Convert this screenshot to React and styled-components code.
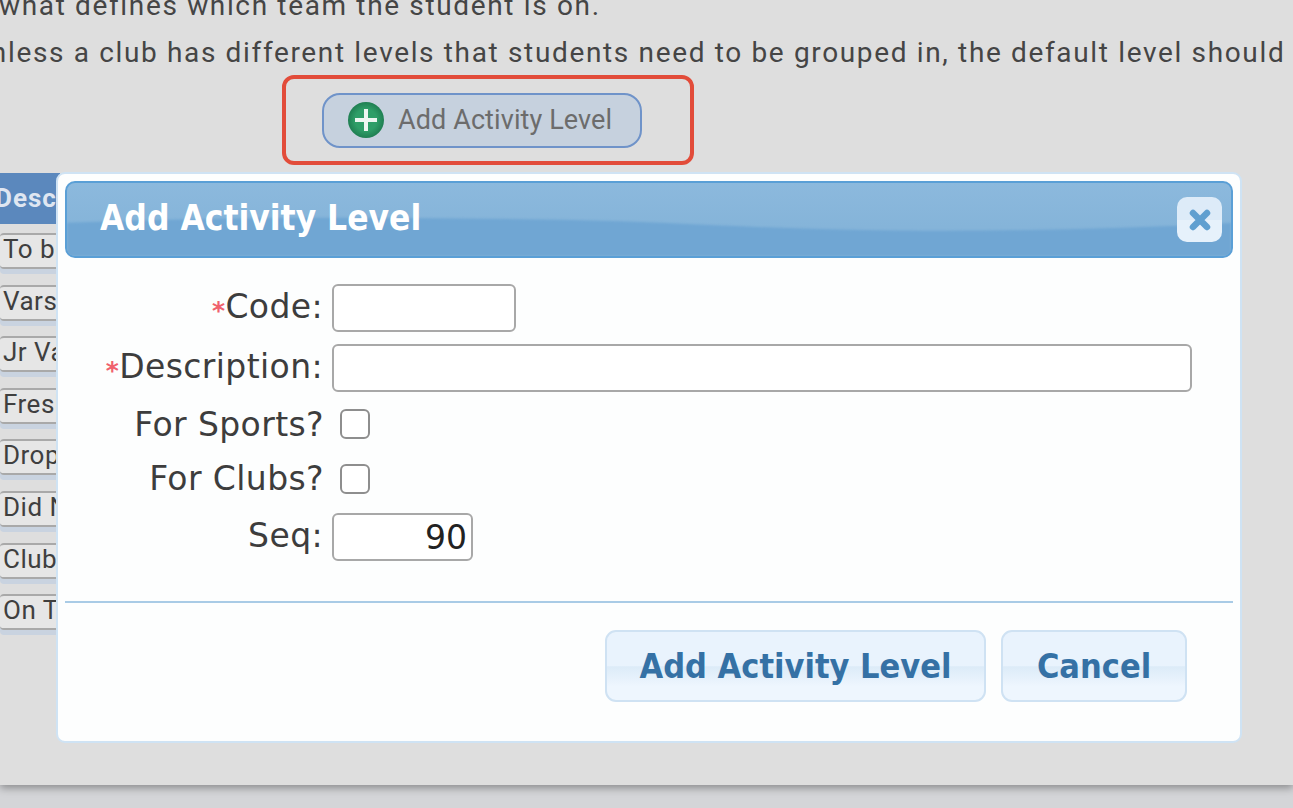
import React from "react";
import styled, { createGlobalStyle } from "styled-components";

const Global = createGlobalStyle`
  html, body { margin: 0; padding: 0; background: #d4d5d8; overflow: hidden; }
`;

const Page = styled.div`
  width: 1293px;
  height: 808px;
  position: relative;
  overflow: hidden;
  font-family: Roboto, sans-serif;
`;

const Sheet = styled.div`
  height: 785px;
  background: #dedede;
  box-shadow: 0 3px 8px rgba(0, 0, 0, 0.35);
  overflow: hidden;
`;

const Copy = styled.p`
  margin: ${(p) => p.$margin};
  font-size: 28px;
  line-height: 32px;
  letter-spacing: 1.65px;
  color: #454545;
  white-space: nowrap;
`;

const ActionRow = styled.div`
  margin: 6px 0 0 282px;
  width: 412px;
  height: 90px;
  box-sizing: border-box;
  border: 4px solid #e24c3a;
  border-radius: 12px;
  display: flex;
  align-items: center;
  justify-content: center;
  padding-right: 12px;
`;

const PillButton = styled.div`
  width: 320px;
  height: 55px;
  box-sizing: border-box;
  border: 2px solid #6f93c9;
  border-radius: 18px;
  background: #c6d1de;
  display: flex;
  align-items: center;
  gap: 14px;
  padding-left: 24px;
  font-size: 27px;
  letter-spacing: 0.1px;
  color: #6c6c6c;
  white-space: nowrap;
`;

const Table = styled.div`
  margin-top: 8px;
  width: 60px;
  overflow: hidden;
`;

const HeadCell = styled.div`
  height: 51px;
  background: #5b88bd;
  color: #dfe6f1;
  font-weight: 700;
  font-size: 26px;
  letter-spacing: 1px;
  line-height: 51px;
  white-space: nowrap;
  margin-bottom: 9px;
  text-indent: -5px;
`;

const RowCell = styled.div`
  height: 36px;
  box-sizing: border-box;
  margin-bottom: 15.6px;
  background: #e6e6e6;
  border-radius: 4px 0 0 4px;
  border-top: 2px solid #a9a9a9;
  border-bottom: 2px solid #a9a9a9;
  box-shadow: 0 5px 0 #c9d3e0;
  padding-left: 3px;
  font-size: 26px;
  letter-spacing: 0.5px;
  line-height: 28px;
  color: #3f3f3f;
  white-space: nowrap;
`;

const Modal = styled.div`
  position: absolute;
  left: 56px;
  top: 172px;
  width: 1186px;
  height: 571px;
  box-sizing: border-box;
  padding: 7px 7px 0;
  background: #fdfefe;
  border: 2px solid #cfe3f4;
  border-radius: 9px;
`;

const TitleBar = styled.div`
  position: relative;
  overflow: hidden;
  height: 77px;
  box-sizing: border-box;
  border: 2px solid #5a9fd6;
  border-radius: 10px;
  background: linear-gradient(#8cb9dd, #85b4d9 60%);
  display: flex;
  align-items: center;
  justify-content: space-between;
  padding: 0 9px 0 33px;
`;

const Gloss = styled.svg`
  position: absolute;
  left: 0;
  top: 0;
  width: 100%;
  height: 100%;
  filter: blur(1px);
`;

const TitleText = styled.div`
  position: relative;
  margin-top: -3px;
  font-family: "DejaVu Sans Condensed", "DejaVu Sans", sans-serif;
  font-weight: 700;
  font-size: 35px;
  color: #fff;
`;

const CloseButton = styled.div`
  position: relative;
  width: 45px;
  height: 45px;
  border-radius: 10px;
  background: linear-gradient(#ddebf8 0 50%, #e6f1fb 50% 100%);
  display: flex;
  align-items: center;
  justify-content: center;
`;

const Form = styled.div`
  margin-top: 26px;
  display: grid;
  grid-template-columns: 257px 1fr;
  grid-template-rows: 48px 48px 40px 45px 48px;
  row-gap: 12px;
  align-content: start;
  height: 317px;
  font-family: "DejaVu Sans", sans-serif;
  font-size: 33px;
  color: #3d3d3d;
`;

const Label = styled.div`
  justify-self: end;
  align-self: center;
  white-space: nowrap;
  letter-spacing: 0.4px;
  margin-right: ${(p) => (p.$tight ? "-2px" : "-1px")};
  margin-bottom: ${(p) => (p.$tight ? "0" : "3px")};
`;

const Star = styled.span`
  color: #f0616d;
  font-size: 25px;
  font-weight: 700;
  vertical-align: -1px;
`;

const Field = styled.input`
  display: block;
  box-sizing: border-box;
  margin-left: 10px;
  width: ${(p) => p.$width}px;
  height: 48px;
  border: 2px solid #a8a8a8;
  border-radius: 6px;
  background: #fff;
  padding: 0 4px;
  font-family: "DejaVu Sans", sans-serif;
  font-size: 33px;
  color: #222;
  text-align: ${(p) => p.$align || "left"};
  outline: none;
`;

const Check = styled.div`
  align-self: center;
  box-sizing: border-box;
  margin-left: 18px;
  width: 30px;
  height: 30px;
  border: 2px solid #8e8e8e;
  border-radius: 6px;
  background: #fff;
`;

const Footer = styled.div`
  border-top: 2px solid #a9cbe6;
  display: flex;
  justify-content: flex-end;
  gap: 15px;
  padding: 27px 46px 0 0;
`;

const DialogButton = styled.div`
  width: ${(p) => p.$width}px;
  height: 72px;
  box-sizing: border-box;
  display: flex;
  align-items: center;
  justify-content: center;
  border: 2px solid #cfe2f3;
  border-radius: 11px;
  background: linear-gradient(#e9f3fd 0 50%, #dcebf8 51%, #eef6fe 80%);
  font-family: "DejaVu Sans Condensed", "DejaVu Sans", sans-serif;
  font-weight: 700;
  font-size: 34px;
  color: #3571a5;
  white-space: nowrap;
`;

const rows = ["To be", "Varsity", "Jr Varsity", "Freshman", "Dropped", "Did Not", "Club", "On Team"];

export default function App() {
  return (
    <Page>
      <Global />
      <Sheet>
        <Copy $margin="-10px 0 0 -1px">what defines which team the student is on.</Copy>
        <Copy $margin="15px 0 0 -29px">Unless a club has different levels that students need to be grouped in, the default level should</Copy>
        <ActionRow>
          <PillButton>
            <svg width="36" height="36" viewBox="0 0 36 36">
              <defs>
                <radialGradient id="plusFill">
                  <stop offset="60%" stopColor="#2f9e68" />
                  <stop offset="100%" stopColor="#1f7f52" />
                </radialGradient>
              </defs>
              <circle cx="18" cy="18" r="18" fill="url(#plusFill)" />
              <path d="M18 7v22M7 18h22" stroke="#eef6f1" strokeWidth="4" />
            </svg>
            Add Activity Level
          </PillButton>
        </ActionRow>
        <Table>
          <HeadCell>Description</HeadCell>
          {rows.map((r) => (
            <RowCell key={r}>{r}</RowCell>
          ))}
        </Table>
      </Sheet>
      <Modal>
        <TitleBar>
          <Gloss viewBox="0 0 1168 77" preserveAspectRatio="none">
            <path d="M-4 42C120 37 240 36 335 37C430 38 510 38 595 42C680 46 760 50 835 50C930 51 1060 49 1172 42V82H-4Z" fill="#70a6d3" />
          </Gloss>
          <TitleText>Add Activity Level</TitleText>
          <CloseButton>
            <svg width="24" height="24" viewBox="0 0 24 24">
              <path d="M5 5l14 14M19 5L5 19" stroke="#5f9fd0" strokeWidth="6.5" strokeLinecap="round" />
            </svg>
          </CloseButton>
        </TitleBar>
        <Form>
          <Label><Star>*</Star>Code:</Label>
          <Field $width={184} />
          <Label><Star>*</Star>Description:</Label>
          <Field $width={860} />
          <Label $tight>For Sports?</Label>
          <Check />
          <Label $tight>For Clubs?</Label>
          <Check />
          <Label>Seq:</Label>
          <Field $width={141} $align="right" defaultValue="90" />
        </Form>
        <Footer>
          <DialogButton $width={381}>Add Activity Level</DialogButton>
          <DialogButton $width={186}>Cancel</DialogButton>
        </Footer>
      </Modal>
    </Page>
  );
}
